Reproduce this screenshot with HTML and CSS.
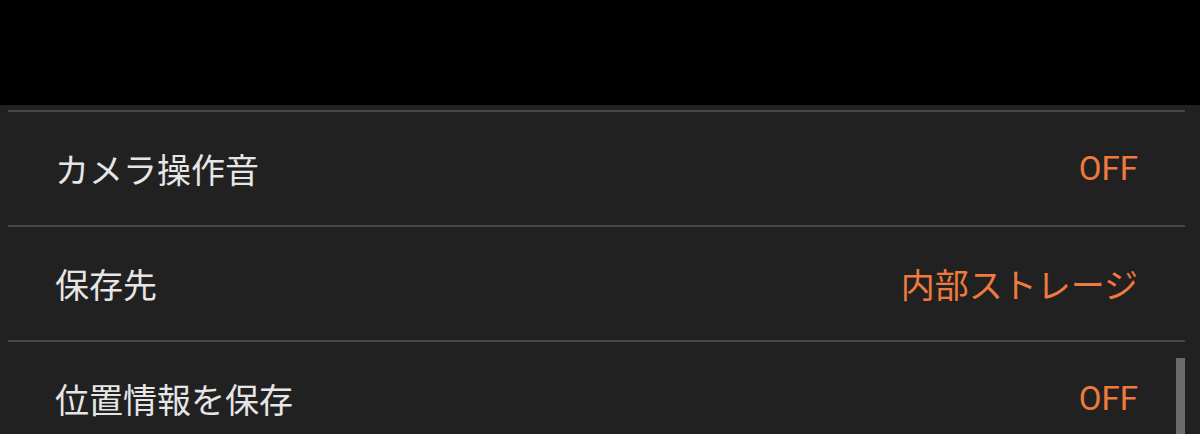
FILE: index.html
```html
<!DOCTYPE html>
<html lang="ja">
<head>
<meta charset="utf-8">
<link rel="stylesheet" href="styles.css">
</head>
<body>
<div class="topbar"></div>
<div class="list">
  <div class="sep"></div>
  <div class="row"><span class="label">カメラ操作音</span><span class="value latin">OFF</span></div>
  <div class="sep"></div>
  <div class="row"><span class="label">保存先</span><span class="value">内部ストレージ</span></div>
  <div class="sep"></div>
  <div class="row"><span class="label">位置情報を保存</span><span class="value latin">OFF</span></div>
  <div class="scrollbar"></div>
</div>
</body>
</html>
```
FILE: styles.css
```css
html, body {
  margin: 0;
  padding: 0;
  background: #000;
  height: 434px;
  overflow: hidden;
}
.topbar {
  height: 105px;
  background: #000;
}
.list {
  position: relative;
  background: #212121;
  padding-top: 5px;
  height: 329px;
  box-sizing: border-box;
  font-family: Roboto, "Noto Sans CJK JP", sans-serif;
  font-size: 34px;
}
.sep {
  height: 2px;
  background: #464646;
  margin: 0 15px 0 8px;
}
.row {
  height: 113px;
  display: flex;
  align-items: center;
  justify-content: space-between;
  padding: 0 62px 0 55px;
}
.label {
  color: #e6e6e6;
}
.value {
  color: #f07a3c;
}
.latin {
  font-size: 33px;
}
.scrollbar {
  position: absolute;
  left: 1176px;
  top: 253px;
  width: 9px;
  bottom: 0;
  background: #6b6b6b;
}
```
